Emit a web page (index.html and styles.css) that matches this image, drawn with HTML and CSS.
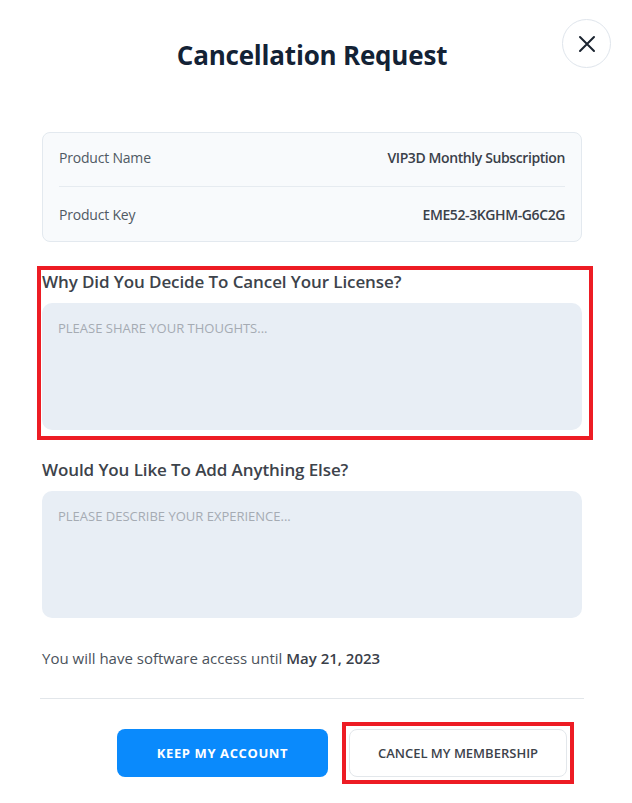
FILE: index.html
```html
<!DOCTYPE html>
<html lang="en">
<head>
  <meta charset="UTF-8" />
  <meta name="viewport" content="width=device-width, initial-scale=1.0" />
  <title>Cancellation Request</title>
  <link rel="stylesheet" href="styles.css">
</head>
<body>
  <div class="modal">
    <header>
      <h1>Cancellation Request</h1>
      <button class="close" aria-label="Close">
        <svg width="18" height="18" viewBox="0 0 18 18">
          <path d="M2 2 L16 16 M16 2 L2 16" stroke="#1b2430" stroke-width="2" stroke-linecap="round" fill="none" />
        </svg>
      </button>
    </header>

    <div class="info-card">
      <div class="info-row">
        <span>Product Name</span>
        <strong>VIP3D Monthly Subscription</strong>
      </div>
      <div class="info-row">
        <span>Product Key</span>
        <strong>EME52-3KGHM-G6C2G</strong>
      </div>
    </div>

    <div class="field marked">
      <label for="reason">Why Did You Decide To Cancel Your License?</label>
      <textarea id="reason" placeholder="PLEASE SHARE YOUR THOUGHTS..."></textarea>
    </div>

    <div class="field">
      <label for="extra">Would You Like To Add Anything Else?</label>
      <textarea id="extra" placeholder="PLEASE DESCRIBE YOUR EXPERIENCE..."></textarea>
    </div>

    <p class="access">You will have software access until <strong>May 21, 2023</strong></p>

    <div class="actions">
      <button class="btn keep">KEEP MY ACCOUNT</button>
      <span class="btn-frame">
        <button class="btn cancel">CANCEL MY MEMBERSHIP</button>
      </span>
    </div>
  </div>
</body>
</html>
```

FILE: styles.css
```css
body {
  margin: 0;
  font-family: 'Open Sans', 'Noto Sans', sans-serif;
  background: #fff;
  color: #3d434b;
}
.modal {
  width: 540px;
  margin-left: 42px;
  padding: 36px 0 26px;
}
header {
  position: relative;
  text-align: center;
  height: 96px;
}
header h1 {
  margin: 0;
  font-size: 26px;
  font-weight: 700;
  color: #132235;
  line-height: 38px;
  letter-spacing: -0.2px;
}
.close {
  position: absolute;
  top: -17px;
  right: -29px;
  width: 49px;
  height: 49px;
  border-radius: 50%;
  border: 1px solid #dfe5ec;
  background: #fff;
  display: flex;
  align-items: center;
  justify-content: center;
  cursor: pointer;
}
.info-card {
  background: #f8fafc;
  border: 1px solid #e3e9ef;
  border-radius: 8px;
  padding: 0 16px;
}
.info-row {
  display: flex;
  justify-content: space-between;
  align-items: center;
  height: 54px;
  font-size: 14px;
}
.info-row:first-child {
  height: 53px;
  padding-bottom: 4px;
  box-sizing: border-box;
}
.info-row + .info-row {
  border-top: 1px solid #e6ebf0;
}
.info-row span {
  color: #4f5963;
  letter-spacing: -0.2px;
}
.info-row strong {
  color: #3a4049;
  font-weight: 600;
  letter-spacing: -0.4px;
}
.field {
  margin-top: 28px;
  position: relative;
}
.field label {
  display: block;
  font-size: 17px;
  font-weight: 600;
  line-height: 24px;
  letter-spacing: -0.1px;
  color: #3d434b;
  margin-bottom: 9px;
}
.field textarea {
  display: block;
  width: 100%;
  box-sizing: border-box;
  height: 127px;
  border: none;
  border-radius: 10px;
  background: #e8eef5;
  padding: 16px;
  font-family: inherit;
  font-size: 13px;
  resize: none;
}
.field textarea::placeholder {
  color: #a5abb3;
}
/* red highlight frame around the first question */
.field.marked::after {
  content: '';
  position: absolute;
  top: -4px;
  left: -5px;
  right: -11px;
  bottom: -10px;
  border: 4px solid #ed1c24;
  pointer-events: none;
}
.access {
  margin: 28px -2px 0;
  padding: 0 0 28px 2px;
  font-size: 15px;
  line-height: 24px;
  color: #4a525b;
  border-bottom: 1px solid #e2e6ea;
}
.access strong {
  font-weight: 600;
  color: #3a4049;
}
.actions {
  display: flex;
  justify-content: flex-end;
  align-items: center;
  gap: 14px;
  padding-right: 8px;
  margin-top: 23px;
}
.btn {
  height: 48px;
  border-radius: 8px;
  font-family: inherit;
  font-size: 13px;
  font-weight: 700;
  cursor: pointer;
}
.keep {
  width: 211px;
  background: #0a8afc;
  color: #fff;
  border: none;
  letter-spacing: 0.6px;
}
.btn-frame {
  display: flex;
  padding: 3px;
  border: 4px solid #ed1c24;
}
.cancel {
  width: 218px;
  background: #fff;
  color: #3d434b;
  border: 1px solid #e3e7eb;
  font-weight: 600;
}
```
